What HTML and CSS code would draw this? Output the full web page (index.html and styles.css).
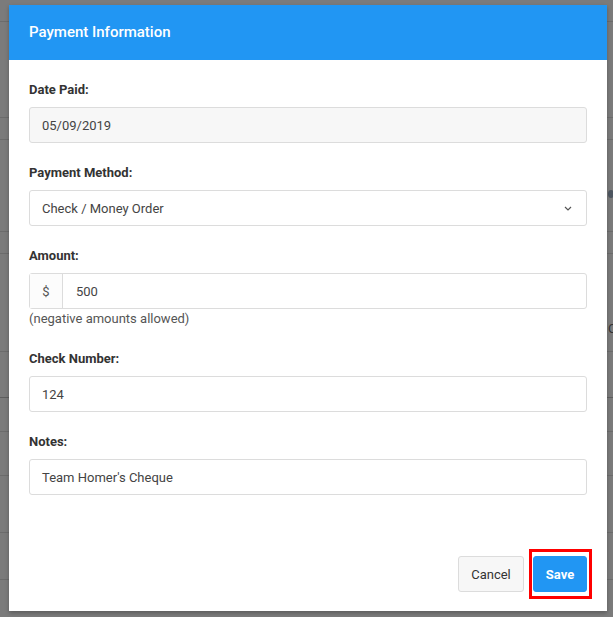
FILE: index.html
```html
<!DOCTYPE html>
<html>
<head>
<meta charset="utf-8">
<title>Payment Information</title>
<link rel="stylesheet" href="styles.css">
</head>
<body>
<div class="backdrop">
  <div class="bg-row r1"></div>
  <div class="bg-row r2"></div>
  <div class="bg-row r3"></div>
  <div class="bg-row r4"><span class="bg-dot"></span></div>
  <div class="bg-row r5"></div>
  <div class="bg-row r6"><span class="bg-char">C</span></div>
  <div class="bg-row r7 dark"></div>
  <div class="bg-row r8"></div>
  <div class="bg-row r9"></div>
  <div class="bg-row r10"></div>
  <div class="bg-row r11"></div>
</div>

<div class="modal">
  <div class="modal-header">Payment Information</div>
  <div class="modal-body">
    <div class="group">
      <label class="label">Date Paid:</label>
      <div class="input readonly">05/09/2019</div>
    </div>
    <div class="group">
      <label class="label">Payment Method:</label>
      <div class="input select">
        <span>Check / Money Order</span>
        <svg class="chev" width="8" height="5" viewBox="0 0 8 5"><path d="M1 1 L4 4 L7 1" fill="none" stroke="#555" stroke-width="1.2"/></svg>
      </div>
    </div>
    <div class="group">
      <label class="label">Amount:</label>
      <div class="input-group">
        <span class="addon">$</span>
        <span class="ig-field">500</span>
      </div>
      <div class="help">(negative amounts allowed)</div>
    </div>
    <div class="group">
      <label class="label">Check Number:</label>
      <div class="input">124</div>
    </div>
    <div class="group">
      <label class="label">Notes:</label>
      <div class="input">Team Homer's Cheque</div>
    </div>
  </div>
  <div class="modal-footer">
    <button class="btn btn-default">Cancel</button>
    <span class="highlight"><button class="btn btn-primary">Save</button></span>
  </div>
</div>
</body>
</html>
```
FILE: styles.css
```css
* { box-sizing: border-box; }
html, body { margin: 0; padding: 0; }
body {
  width: 613px;
  height: 617px;
  overflow: hidden;
  background: #7b7b7b;
  font-family: Roboto, "Liberation Sans", Arial, sans-serif;
  position: relative;
}
.backdrop { display: flex; flex-direction: column; }
.bg-row { border-bottom: 1px solid #6c6c6c; position: relative; }
.bg-row.dark { border-bottom-color: #5e5e5e; }
.r1 { height: 22px; }
.r2 { height: 96px; }
.r3 { height: 22px; }
.r4 { height: 92px; }
.r5 { height: 22px; }
.r6 { height: 98px; }
.r7 { height: 46px; }
.r8 { height: 34px; }
.r9 { height: 44px; }
.r10 { height: 57px; }
.r11 { height: 47px; }
.bg-dot {
  position: absolute; left: 608px; top: 50px;
  width: 6px; height: 8px; border-radius: 50%; background: #4d5660;
}
.bg-char {
  position: absolute; left: 608px; top: 67px;
  font-size: 13px; line-height: 15px; color: #333;
}

.modal {
  position: absolute;
  left: 9px;
  top: 5px;
  width: 598px;
  height: 606px;
  background: #fff;
  box-shadow: 0 2px 4px rgba(0,0,0,0.25);
  display: flex;
  flex-direction: column;
}
.modal-header {
  background: #2196f3;
  color: #fff;
  height: 55px;
  padding: 0 20px;
  display: flex;
  align-items: center;
  font-size: 15px;
  font-weight: 500;
  padding-bottom: 2px;
}
.modal-body {
  padding: 21px 20px 0 20px;
  flex: 1;
}
.group { margin-bottom: 21px; }
.label {
  display: block;
  font-size: 13px;
  font-weight: 700;
  color: #333;
  line-height: 18px;
  margin-bottom: 8px;
}
.input {
  height: 36px;
  border: 1px solid #dcdcdc;
  border-radius: 3px;
  padding: 0 12px;
  display: flex;
  align-items: center;
  font-size: 13px;
  color: #444;
  background: #fff;
}
.input.readonly { background: #f7f7f7; }
.input.select { justify-content: space-between; padding-right: 14px; }
.chev { display: block; }
.input-group {
  height: 36px;
  border: 1px solid #dcdcdc;
  border-radius: 3px;
  display: flex;
  font-size: 13px;
  color: #444;
}
.addon {
  width: 33px;
  border-right: 1px solid #dcdcdc;
  display: flex;
  align-items: center;
  justify-content: center;
  background: #fcfcfc;
  color: #555;
}
.ig-field {
  flex: 1;
  display: flex;
  align-items: center;
  padding: 0 13px;
}
.help {
  font-size: 13px;
  color: #555;
  line-height: 20px;
}
.modal-footer {
  display: flex;
  justify-content: flex-end;
  align-items: center;
  padding: 0 15px 12px 20px;
  gap: 5px;
}
.btn {
  height: 36px;
  border-radius: 3px;
  font-family: Roboto, "Liberation Sans", Arial, sans-serif;
  font-size: 13px;
  padding: 0;
  cursor: pointer;
}
.btn-default {
  width: 66px;
  background: #f7f7f7;
  border: 1px solid #dcdcdc;
  color: #333;
}
.btn-primary {
  width: 54px;
  background: #2196f3;
  border: 1px solid #2196f3;
  color: #fff;
  font-weight: 700;
  display: block;
}
.highlight {
  display: block;
  border: 3px solid #ff0000;
  padding: 4px 2px 4px 1px;
}
```
